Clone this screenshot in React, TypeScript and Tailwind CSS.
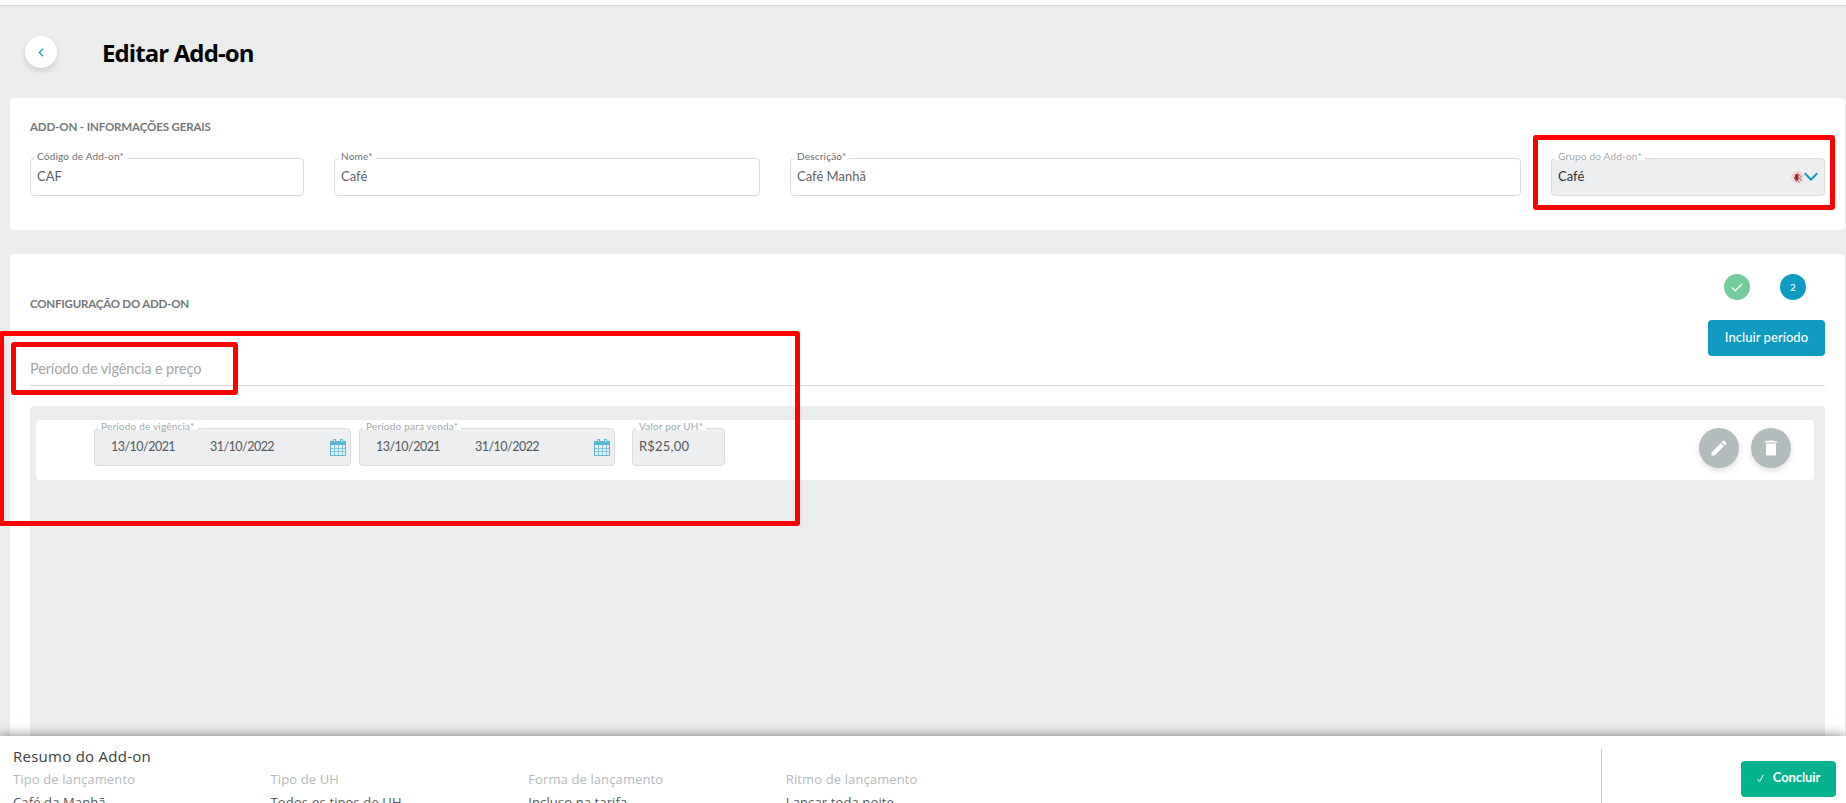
import type { ReactNode } from "react";
import clsx from "clsx";

interface FieldProps {
  label: string;
  className?: string;
  disabled?: boolean;
  children: ReactNode;
}

function Field({ label, className, disabled, children }: FieldProps) {
  return (
    <div
      className={clsx(
        "relative flex h-[38px] shrink-0 items-center rounded border border-[#d9dcdf] px-1.5",
        disabled ? "bg-[#eceef0]" : "bg-white",
        className
      )}
    >
      <span
        className={clsx(
          "absolute -top-2.5 left-[3px] px-[3px] text-[10px] leading-[15px] tracking-[0.2px] whitespace-nowrap",
          disabled ? "text-[#a3a7aa]" : "text-[#6d7174]"
        )}
      >
        <span className="absolute inset-x-0 top-2 h-[3px] bg-white" />
        <span className="relative">{label}</span>
      </span>
      {children}
    </div>
  );
}

function CalendarIcon() {
  return (
    <svg width="16" height="17" viewBox="0 0 16 17" fill="none">
      <path d="M0.5 3h15v13.5h-15z" stroke="#5bb8d4" />
      <path d="M0 2h16v4H0z" fill="#5bb8d4" />
      <path d="M3 0h3v3.5H3zM10 0h3v3.5h-3z" fill="#5bb8d4" />
      <path d="M4.5 1v2M11.5 1v2" stroke="#c9e7f0" />
      <path d="M4.5 6v10M8.5 6v10M12.5 6v10M1 9.500h14M1 12.500h14" stroke="#5bb8d4" strokeOpacity="0.7" />
    </svg>
  );
}

function DateRange({ from, to }: { from: string; to: string }) {
  return (
    <div className="flex flex-1 items-center pl-2.5 text-[12.5px] tracking-[-0.52px] text-[#56595c]">
      <span className="w-[82px]">{from}</span>
      <span className="h-5 w-px bg-[#e8eaec]" />
      <span className="ml-4">{to}</span>
      <span className="-mr-0.5 ml-auto">
        <CalendarIcon />
      </span>
    </div>
  );
}

const summary = [
  { label: "Tipo de lançamento", value: "Café da Manhã" },
  { label: "Tipo de UH", value: "Todos os tipos de UH" },
  { label: "Forma de lançamento", value: "Incluso na tarifa" },
  { label: "Ritmo de lançamento", value: "Lançar toda noite" },
];

export default function App() {
  return (
    <div className="relative flex h-[803px] w-[1846px] flex-col overflow-hidden bg-[#ebedec] font-['Lato',sans-serif]">
      <div className="h-1.5 shrink-0 border-b border-[#d8dada] bg-white" />

      <header className="flex h-[92px] shrink-0 items-start pl-[25px] pt-[30px]">
        <button className="flex size-8 items-center justify-center rounded-full bg-white shadow-[0_3px_6px_rgba(0,0,0,0.12)]">
          <svg width="6" height="9" viewBox="0 0 6 9" fill="none">
            <path d="M5 0.8L1.3 4.5L5 8.2" stroke="#2fa0c4" strokeWidth="1.4" />
          </svg>
        </button>
        <h1 className="ml-[45px] font-['Open_Sans',sans-serif] text-2xl font-bold leading-[33px] tracking-[-0.9px] text-black">
          Editar Add-on
        </h1>
      </header>

      <section className="mr-px ml-2.5 h-[132px] shrink-0 rounded bg-white px-5 pt-5">
        <h2 className="text-[11.5px] font-bold leading-[18px] tracking-[-0.13px] text-[#74787b]">
          ADD-ON - INFORMAÇÕES GERAIS
        </h2>
        <div className="mt-[22px] flex gap-[30px] text-[13px] text-[#5d6164]">
          <Field label="Código de Add-on*" className="w-[274px]">
            <span>CAF</span>
          </Field>
          <Field label="Nome*" className="w-[426px]">
            <span>Café</span>
          </Field>
          <Field label="Descrição*" className="w-[731px]">
            <span>Café Manhã</span>
          </Field>
          <Field label="Grupo do Add-on*" className="w-[274px]" disabled>
            <span className="text-[#303336]">Café</span>
            <span className="ml-auto flex items-center">
              <svg width="13" height="14" viewBox="0 0 13 14">
                <circle cx="6.5" cy="7" r="6.500" fill="#f5d3d4" />
                <path d="M4 4.500L7.500 3.500v6.500l-3 0.500-1-2z" fill="#b0202a" />
                <path d="M8 4.500l1.800 2-1.300 1.800 2 2.500M6 10l2.500 2.500M3.500 7.500l2 4" stroke="#66737d" strokeWidth="1" fill="none" />
              </svg>
              <svg width="14" height="10" viewBox="0 0 14 10" fill="none">
                <path d="M0.800 1.200L7 7.600L13.200 1.200" stroke="#0d9ac0" strokeWidth="2" />
              </svg>
            </span>
          </Field>
        </div>
      </section>

      <section className="mr-px ml-2.5 mt-6 flex h-[600px] shrink-0 flex-col rounded bg-white px-5">
        <div className="flex h-[132px] shrink-0 justify-between border-b border-[#d9dbdc]">
          <div className="pt-[41px]">
            <h2 className="text-[11.5px] font-bold leading-[18px] tracking-[-0.2px] text-[#74787b]">
              CONFIGURAÇÃO DO ADD-ON
            </h2>
            <p className="mt-[46px] text-[14.5px] leading-5 tracking-[-0.13px] text-[#a3a7aa]">
              Período de vigência e preço
            </p>
          </div>
          <div className="flex flex-col items-end pt-5">
            <div className="mr-[19px] flex gap-[30px]">
              <span className="flex size-[26px] items-center justify-center rounded-full bg-[#73cc99]">
                <svg width="12" height="9" viewBox="0 0 12 9" fill="none">
                  <path d="M1 4.500L4.300 7.800L11 1" stroke="#fff" strokeWidth="1.400" />
                </svg>
              </span>
              <span className="flex size-[26px] items-center justify-center rounded-full bg-[#0e9ac1] text-[10px] font-medium text-white">
                2
              </span>
            </div>
            <button className="mt-5 h-9 w-[117px] rounded bg-[#0e9ac1] text-[13px] font-medium tracking-[0.05px] text-white">
              Incluir período
            </button>
          </div>
        </div>

        <div className="mt-5 flex-1 rounded-t bg-[#ebedec] pl-1.5 pr-[11px] pt-3.5">
          <div className="flex h-[60px] rounded bg-white pl-[58px] pr-[23px] pt-2">
            <Field label="Período de vigência*" className="w-[257px]" disabled>
              <DateRange from="13/10/2021" to="31/10/2022" />
            </Field>
            <Field label="Período para venda*" className="ml-2 w-[256px]" disabled>
              <DateRange from="13/10/2021" to="31/10/2022" />
            </Field>
            <Field label="Valor por UH*" className="ml-[17px] w-[93px]" disabled>
              <span className="text-[13px] tracking-[0.2px] text-[#56595c]">R$25,00</span>
            </Field>
            <div className="ml-auto flex gap-3">
              <button className="flex size-10 items-center justify-center rounded-full bg-[#b4bbbd] shadow-[0_3px_6px_rgba(0,0,0,0.12)]">
                <svg width="20" height="20" viewBox="0 0 24 24" fill="#fff">
                  <path d="M3 17.250V21h3.750L17.810 9.940l-3.750-3.750L3 17.250zM20.710 7.040a1 1 0 0 0 0-1.410l-2.340-2.340a1 1 0 0 0-1.410 0l-1.830 1.830 3.750 3.750 1.830-1.830z" />
                </svg>
              </button>
              <button className="flex size-10 items-center justify-center rounded-full bg-[#b4bbbd] shadow-[0_3px_6px_rgba(0,0,0,0.12)]">
                <svg width="12" height="16" viewBox="0 0 12 16" fill="#fff">
                  <path d="M4 0.500h4l0.500 0.500H12v1.500H0V1h3.500zM1 3.500h10V14.500a1 1 0 0 1-1 1H2a1 1 0 0 1-1-1z" />
                </svg>
              </button>
            </div>
          </div>
        </div>
      </section>

      {/* annotation boxes */}
      <div className="absolute left-[1533px] top-[135px] h-[75px] w-[302px] rounded-[3px] border-5 border-[#ff0000]" />
      <div className="absolute -left-px top-[331px] h-[195px] w-[801px] rounded-[3px] border-5 border-[#ff0000]" />
      <div className="absolute left-[11px] top-[342px] h-[53px] w-[227px] rounded-[3px] border-5 border-[#ff0000]" />

      <footer className="absolute inset-x-0 top-[736px] flex h-[100px] bg-white shadow-[0_0_12px_rgba(0,0,0,0.5)]">
        <div className="w-[1601px] shrink-0 pl-[13px] pt-2.5 font-['Open_Sans',sans-serif]">
          <h3 className="text-[15px] leading-5 tracking-[0.26px] text-[#3b3e41]">Resumo do Add-on</h3>
          <div className="mt-[3px] flex text-[13px] tracking-[0.12px]">
            {summary.map((item) => (
              <div key={item.label} className="w-[257.6px]">
                <p className="leading-5 text-[#b4babc]">{item.label}</p>
                <p className="mt-[3px] leading-5 text-[#56595c]">{item.value}</p>
              </div>
            ))}
          </div>
        </div>
        <div className="mt-[13px] w-px bg-[#cccfd1]" />
        <button className="ml-auto mr-2.5 mt-[25px] flex h-9 w-[95px] items-center justify-center gap-[9px] rounded bg-[#03b38d] pb-0.5 text-[13px] font-bold tracking-[-0.1px] text-white">
          <svg width="7" height="9" viewBox="0 0 7 9" fill="none">
            <path d="M0.500 5L2.500 7.800L6.500 0.800" stroke="#fff" />
          </svg>
          Concluir
        </button>
      </footer>
    </div>
  );
}
